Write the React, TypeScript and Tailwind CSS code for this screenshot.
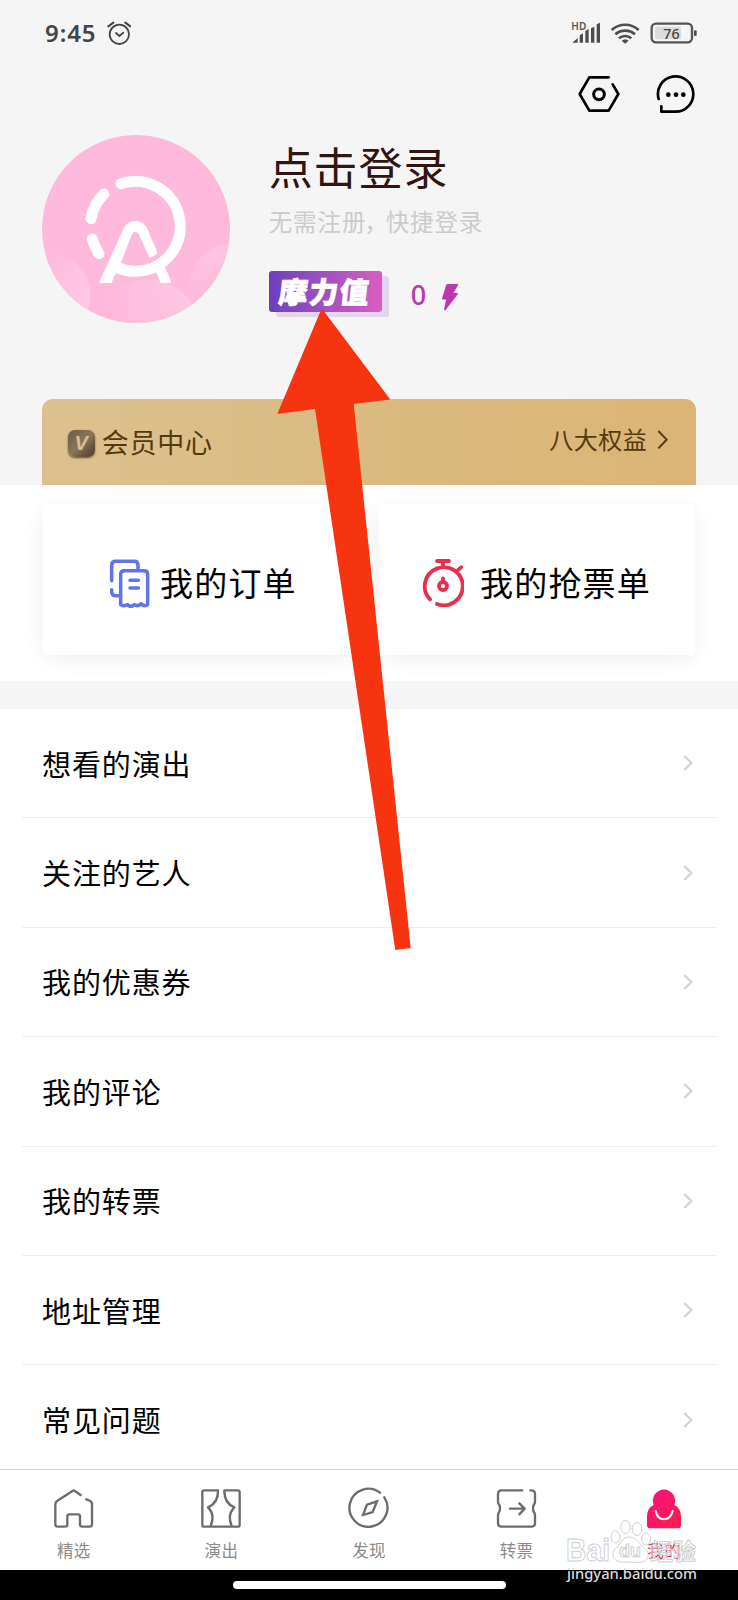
import type { ReactNode } from "react";

const menuItems = [
  "想看的演出",
  "关注的艺人",
  "我的优惠券",
  "我的评论",
  "我的转票",
  "地址管理",
  "常见问题",
];

const StatusBar = () => {
  return (
    <div className="flex h-16 items-center justify-between pl-[45px] pr-[40px] pt-[2px] text-[#444]">
      <div className="flex items-center">
        <span className="font-['Noto_Sans',sans-serif] text-[24px] font-semibold leading-none tracking-[0.9px]">
          9:45
        </span>
        <svg className="ml-[11px] h-6 w-6" viewBox="321 62 72 72" fill="none" stroke="currentColor" strokeLinecap="round">
          <circle cx="358" cy="102" r="29" strokeWidth="5.500" />
          <path d="M348 98l10 9 12-10" strokeWidth="5.500" strokeLinejoin="round" />
          <path d="M325 78l15-11M376 67l15 11" strokeWidth="6" />
        </svg>
      </div>
      <svg className="h-[24px] w-[128px] overflow-visible" viewBox="91 62 384 72">
        <text x="95" y="88" fontSize="30" fontWeight="600" fontFamily="Noto Sans, sans-serif" fill="#555">
          HD
        </text>
        <g fill="#4d4d4d">
          <path d="M98 127l16-14v14zM120 105l10-6v28h-10zM137 92l10-6v41h-10zM154 84l10-5v48h-10zM171 72l10-5v60h-10z" />
          <path d="M246 121l10 9 11-9a16 16 0 0 0-21 0z" />
          <rect x="463" y="90" width="8" height="17" rx="3" />
        </g>
        <g fill="none" stroke="#4d4d4d" strokeWidth="8">
          <path d="M216 89a60 60 0 0 1 81 0M227 102a44 44 0 0 1 59 0M238 114a28 28 0 0 1 37 0" />
        </g>
        <rect x="336" y="70" width="121" height="56" rx="13" fill="none" stroke="#555" strokeWidth="7" />
        <rect x="346" y="79" width="78" height="38" rx="4" fill="#dcdcdc" />
        <text x="371" y="115" fontSize="43" fontWeight="500" fontFamily="Noto Sans, sans-serif" fill="#444">
          76
        </text>
      </svg>
    </div>
  );
};

const Actions = () => {
  return (
    <div className="flex h-[60px] items-center justify-end gap-9 pr-[43px]">
      <svg className="h-[38px] w-[42px]" viewBox="113 225 126 114" fill="none" stroke="#000" strokeWidth="8" strokeLinecap="round" strokeLinejoin="round">
        <path d="M205 232h-58l-29 50 29 50h58l29-50-17-29" />
        <circle cx="176" cy="283" r="16" strokeWidth="9" />
      </svg>
      <svg className="h-[40px] w-[39px]" viewBox="349 222 117 120" fill="none" stroke="#000" strokeWidth="8" strokeLinecap="round" strokeLinejoin="round">
        <path d="M357 297a53 53 0 1 1 50 38h-42v-16" />
        <g fill="#000" stroke="none">
          <circle cx="386" cy="284" r="7" />
          <circle cx="409" cy="284" r="7" />
          <circle cx="431" cy="284" r="7" />
        </g>
      </svg>
    </div>
  );
};

const Avatar = () => {
  return (
    <svg className="h-[188px] w-[188px] shrink-0" viewBox="65 45 564 564">
      <defs>
        <clipPath id="avatarClip">
          <circle cx="347" cy="327" r="282" />
        </clipPath>
        <linearGradient id="bubbleA" x1="1" y1="0.6" x2="0.35" y2="0.2">
          <stop offset="0" stopColor="#ffcae4" />
          <stop offset="1" stopColor="#ffb9dc" />
        </linearGradient>
        <linearGradient id="bubbleB" x1="0.85" y1="0.1" x2="0.2" y2="0.4">
          <stop offset="0" stopColor="#ffc6e2" />
          <stop offset="1" stopColor="#ffb9dc" />
        </linearGradient>
        <linearGradient id="bubbleC" x1="0.4" y1="0" x2="0.4" y2="0.6">
          <stop offset="0" stopColor="#ffc5e1" />
          <stop offset="1" stopColor="#ffb9dc" />
        </linearGradient>
      </defs>
      <g clipPath="url(#avatarClip)">
        <rect x="65" y="45" width="564" height="564" fill="#ffb9dc" />
        <circle cx="82" cy="526" r="128" fill="url(#bubbleA)" />
        <circle cx="380" cy="640" r="162" fill="url(#bubbleB)" />
        <circle cx="640" cy="504" r="135" fill="url(#bubbleC)" />
      </g>
      <g fill="none" stroke="#fff" strokeWidth="33" strokeLinecap="round">
        <path d="M302 191A135 135 0 1 1 348 454" />
        <path d="M251 222A135 135 0 0 0 212 296M216 357A135 135 0 0 0 236 401" />
      </g>
      <g fill="#fff">
        <path d="M241 489q-5 0-3-5l71-157q11-24 36-24t36 24l31 72q-9 10-24 15l-33-72q-10-13-20 0l-33 87q22 9 46 9v33q-34 0-62-11l-11 26q-1 3-5 3z" />
        <path d="M406 452l28-10 18 41q2 6-4 6h-23q-4 0-6-4z" />
      </g>
    </svg>
  );
};

const Profile = () => {
  return (
    <div className="mt-[11px] flex pl-[41.7px]">
      <Avatar />
      <div className="ml-[39px] flex flex-col">
        <h1 className="mt-[3px] text-[44px] leading-[56px] tracking-[0.9px] text-[#301512]">点击登录</h1>
        <p className="mt-[11px] flex text-[23.5px] leading-8 tracking-[0.9px] text-[#cbcbcb]">
          <span>无需注册</span>
          <span className="-ml-[2px] mr-[-3px]">，</span>
          <span>快捷登录</span>
        </p>
        <div className="mt-[34px] flex">
          <div className="flex h-[41px] w-[113px] items-center justify-center rounded-[3px] bg-linear-to-r from-[#6c40bd] to-[#d95cc2] pb-[3px] shadow-[7px_5px_0_#e3d5ee]">
            <span className="-skew-x-6 text-[29px] font-black leading-none tracking-[1.5px] text-white [-webkit-text-stroke:0.8px_white]">
              摩力值
            </span>
          </div>
          <span className="ml-[29px] mt-[6px] font-['Noto_Sans',sans-serif] text-[27px] font-medium leading-9 text-[#b43cab]">
            0
          </span>
          <svg className="ml-[16px] mt-3 h-[28px] w-[17px]" viewBox="580 460 50 83" fill="#bd37b0">
            <path d="M597 463h28q4 0 2 4l-13 23h11q3 1 1 4l-35 45q-5 4-5-2l6-28h-9q-4 0-3-4l12-38q1-4 5-4z" />
          </svg>
        </div>
      </div>
    </div>
  );
};

const MemberBar = () => {
  return (
    <div className="mx-[41.7px] mt-[76px] flex h-[86px] items-center justify-between rounded-t-[11px] bg-linear-to-r from-[#dcc18f] to-[#dab474] pl-[26px] pr-[27px] text-[#56380f]">
      <div className="flex items-center">
        <div className="mt-0.5 flex h-[27px] w-[27px] items-center justify-center rounded-[7px] bg-linear-to-br from-[#6b5a45] via-[#8a7659] to-[#4a3b2a] shadow-[0_1px_2px_#6b5230]">
          <span className="font-['Liberation_Sans',sans-serif] text-[20px] font-bold italic leading-none text-[#d5bf98]">V</span>
        </div>
        <span className="mb-0.5 ml-[7px] text-[27px] leading-none tracking-[0.8px]">会员中心</span>
      </div>
      <div className="mb-1.5 flex items-center">
        <span className="text-[24px] leading-none tracking-[0.5px]">八大权益</span>
        <svg className="ml-[10px] mt-px h-[19px] w-[12px]" viewBox="832 152 36 57" fill="none" stroke="currentColor" strokeWidth="6">
          <path d="M836 155l25 26-25 26" />
        </svg>
      </div>
    </div>
  );
};

const OrderIcon = () => {
  return (
    <svg className="-ml-px -mt-0.5 h-[49px] w-[41px]" viewBox="270 209 123 147" fill="none" stroke="#6074e8" strokeWidth="10.500" strokeLinecap="round" strokeLinejoin="round">
      <path d="M278 274v-46q0-12 12-12h56q11 0 11 12v14M278 301v6q0 12 12 12h12" />
      <path d="M305 346v-91q0-11 11-11h59q11 0 11 11v91q-10 7-20-3-10 10-20 3-10 10-21 0-10 7-20 0z" />
      <path d="M333 273h25M333 296h25" />
    </svg>
  );
};

const StopwatchIcon = () => {
  return (
    <svg className="-mt-0.5 h-[48px] w-[42px]" viewBox="157 208 126 144" fill="none" stroke="#e92f50" strokeWidth="11.500" strokeLinecap="round">
      <path d="M181 329a57 57 0 1 1 21 14M202 214h36M220 214v16M264 242l10-9" />
      <circle cx="220" cy="289" r="12" />
      <path d="M220 266v9" />
    </svg>
  );
};

const OrderCard = ({ className, icon, label }: { className: string; icon: ReactNode; label: string }) => {
  return (
    <div
      className={`flex h-[151px] w-[316px] items-center rounded-md bg-white pt-[9px] shadow-[0_4px_24px_rgba(0,0,0,0.07)] ${className}`}
    >
      {icon}
      <span className="mb-[3px] text-[33px] leading-none tracking-[1.2px] text-black">{label}</span>
    </div>
  );
};

const MenuRow = ({ label }: { label: string }) => {
  return (
    <div className="flex h-[109.4px] shrink-0 items-center justify-between border-b border-[#ededed] pl-5 pr-[22.5px]">
      <span className="text-[29px] leading-none tracking-[0.9px] text-black">{label}</span>
      <svg className="h-[18px] w-[11px]" viewBox="937 73 33 54" fill="none" stroke="#d3d3d3" strokeWidth="7">
        <path d="M941 79l21 21-21 21" />
      </svg>
    </div>
  );
};

const tabs = [
  {
    label: "精选",
    icon: (
      <svg className="h-[42px] w-[42px]" viewBox="158 80 126 126" fill="none" stroke="currentColor" strokeWidth="7" strokeLinecap="round" strokeLinejoin="round">
        <path d="M241 104l-21-14-50 32q-5 4-5 10v60q0 7 7 7h22q7 0 7-7v-24q0-6 6-6h26q6 0 6 6v24q0 7 7 7h22q7 0 7-7v-61q0-6-5-9l-12-5" />
      </svg>
    ),
  },
  {
    label: "演出",
    icon: (
      <svg className="h-[42px] w-[42px]" viewBox="600 80 126 126" fill="none" stroke="currentColor" strokeWidth="7" strokeLinecap="round" strokeLinejoin="round">
        <path d="M654 90h-41q-6 0-6 6v97q0 6 6 6h100q6 0 6-6v-97q0-6-6-6h-40q-1 38 30 51-22 22-8 56M654 90q1 38-30 51 22 22 8 56" />
      </svg>
    ),
  },
  {
    label: "发现",
    icon: (
      <svg className="h-[42px] w-[42px]" viewBox="53 80 126 126" fill="none" stroke="currentColor" strokeWidth="7" strokeLinecap="round">
        <path d="M149 97a57 57 0 1 0 13 14" />
        <path d="M140 123l-30 10-12 31 29-9z" strokeLinejoin="miter" />
      </svg>
    ),
  },
  {
    label: "转票",
    icon: (
      <svg className="h-[42px] w-[42px]" viewBox="498 80 126 126" fill="none" stroke="currentColor" strokeWidth="7" strokeLinecap="round" strokeLinejoin="round">
        <path d="M577 90h-62q-11 0-11 11v24q0 4 3 7 6 11 0 24-3 3-3 7v25q0 11 11 11h89q11 0 11-11v-25q0-4-3-7-6-13 0-24 3-3 3-7v-24q0-11-11-11h-3" />
        <path d="M540 145h43M568 129l16 16-16 17" />
      </svg>
    ),
  },
  {
    label: "我的",
    active: true,
    icon: (
      <svg className="h-[42px] w-[42px]" viewBox="309 80 126 126">
        <defs>
          <linearGradient id="me" x1="0" y1="0" x2="1" y2="1">
            <stop offset="0" stopColor="#f80f86" />
            <stop offset="1" stopColor="#fd1f45" />
          </linearGradient>
        </defs>
        <path d="M341 134a33.500 33.500 0 1 1 62 0q20 9 20 34v27q0 9-9 9h-84q-9 0-9-9v-27q0-25 20-34z" fill="url(#me)" />
        <path d="M347 152q5 25 25 25t26-25" fill="none" stroke="#fff" strokeWidth="6" strokeLinecap="round" />
      </svg>
    ),
  },
];

const TabBar = () => {
  return (
    <nav className="flex h-[101px] border-t border-[#d2d2d2] bg-white pt-[17px] text-[#6c6c6c]">
      {tabs.map((tab) => (
        <div key={tab.label} className="flex flex-1 flex-col items-center">
          {tab.icon}
          <span className={`mt-[13px] text-[16.5px] leading-none tracking-[0.3px] ${tab.active ? "text-[#d02a56]" : "text-[#8a8a8a]"}`}>
            {tab.label}
          </span>
        </div>
      ))}
    </nav>
  );
};

const Watermark = () => {
  return (
    <svg className="absolute left-[560px] top-[1515px] h-[75px] w-[145px]" viewBox="560 1515 145 75">
      <g fill="#fff" fillOpacity="0.75" stroke="#cfcfcf" strokeWidth="1">
        <text x="566" y="1561" fontSize="31" fontWeight="700" fontFamily="Liberation Sans, sans-serif" textLength="44" lengthAdjust="spacingAndGlyphs">
          Bai
        </text>
        <ellipse cx="615.500" cy="1537" rx="4.500" ry="6" />
        <ellipse cx="625.500" cy="1527" rx="4.800" ry="6.500" />
        <ellipse cx="637" cy="1529" rx="4.800" ry="6.500" />
        <ellipse cx="646" cy="1539" rx="4.500" ry="6" />
        <path d="M629 1537c-6 0-8 6-12 10-4 3-5 7-3 11 3 5 9 4 16 4s13 2 17-3c3-5 0-9-4-12-4-4-7-10-14-10z" />
        <text x="619" y="1557" fontSize="18" fontWeight="700" fontFamily="Liberation Sans, sans-serif">
          du
        </text>
        <text x="650" y="1560" fontSize="23" fontWeight="700" fontFamily="Noto Sans CJK SC, sans-serif" fillOpacity="0.45">
          经验
        </text>
      </g>
      <text x="567" y="1579" fontSize="14.500" fontWeight="500" fontFamily="Noto Sans, sans-serif" fill="#dcdcdc" textLength="130" lengthAdjust="spacingAndGlyphs">
        jingyan.baidu.com
      </text>
    </svg>
  );
};

const App = () => {
  return (
    <div className="relative flex h-[1600px] w-[738px] flex-col overflow-hidden bg-white font-['Noto_Sans_CJK_SC',sans-serif]">
      <header className="h-[485px] shrink-0 bg-[#f5f5f5]">
        <StatusBar />
        <Actions />
        <Profile />
        <MemberBar />
      </header>

      <section className="flex h-[196px] shrink-0 justify-between overflow-hidden px-[43px] pt-[19px]">
        <OrderCard className="gap-[10px] pl-[67px]" icon={<OrderIcon />} label="我的订单" />
        <OrderCard className="gap-[16px] pl-[43px]" icon={<StopwatchIcon />} label="我的抢票单" />
      </section>

      <div className="h-7 shrink-0 bg-[#f5f5f5]" />

      <section className="flex h-[760px] shrink-0 flex-col overflow-hidden px-[22px]">
        {menuItems.map((item) => (
          <MenuRow key={item} label={item} />
        ))}
      </section>

      <TabBar />
      <div className="flex h-[30px] justify-center bg-black pt-[11px]">
        <div className="h-[8px] w-[273px] rounded-full bg-white" />
      </div>

      <Watermark />
      <svg className="absolute left-[270px] top-[300px] h-[660px] w-[150px]" viewBox="270 300 150 660">
        <path d="M321.700 308.300L390.300 399.500 353.700 404 410.700 948 395.300 950 315 409 277.300 414z" fill="#f73410" />
      </svg>
    </div>
  );
};

export default App;
